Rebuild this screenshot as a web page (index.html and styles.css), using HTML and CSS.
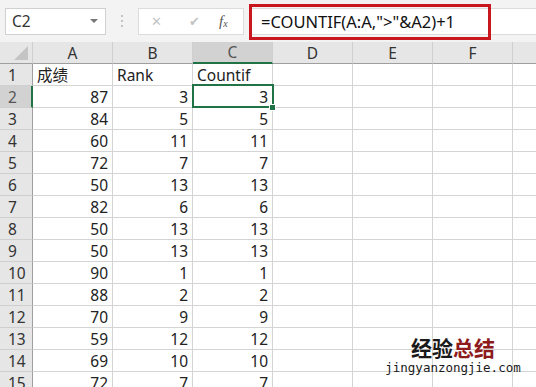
FILE: index.html
```html
<!DOCTYPE html>
<html lang="zh-CN">
<head>
  <meta charset="UTF-8">
  <title>COUNTIF Rank</title>
  <link rel="stylesheet" href="styles.css">
</head>
<body>
  <div class="toolbar">
    <div class="namebox">
      <span>C2</span>
      <span class="arrow"></span>
    </div>
    <div class="dots"><i></i><i></i><i></i></div>
    <div class="buttons">
      <span class="btn cancel">&#x2715;</span>
      <span class="btn ok">&#x2714;</span>
      <span class="btn fx">f<sub>x</sub></span>
    </div>
    <div class="formula">
      <span class="formula-text">=COUNTIF(A:A,"&gt;"&amp;A2)+1</span>
      <div class="mark"></div>
    </div>
  </div>

  <div class="sheet">
    <div class="hd corner"><span class="tri"></span></div>
    <div class="hd col">A</div>
    <div class="hd col">B</div>
    <div class="hd col active-col">C</div>
    <div class="hd col">D</div>
    <div class="hd col">E</div>
    <div class="hd col">F</div>
    <div class="hd col"></div>

    <div class="hd row">1</div>
    <div class="cell">成绩</div>
    <div class="cell">Rank</div>
    <div class="cell">Countif</div>
    <div class="cell"></div><div class="cell"></div><div class="cell"></div><div class="cell"></div>
  </div>

  <div class="watermark">
    <div class="wm-cn"><span>经验</span><span class="red">总结</span></div>
    <div class="wm-en">jingyanzongjie.com</div>
  </div>

  <script>
    const rows = [
      [87, 3, 3], [84, 5, 5], [60, 11, 11], [72, 7, 7], [50, 13, 13],
      [82, 6, 6], [50, 13, 13], [50, 13, 13], [90, 1, 1], [88, 2, 2],
      [70, 9, 9], [59, 12, 12], [69, 10, 10], [72, 7, 7]
    ];
    const sheet = document.querySelector('.sheet');
    rows.forEach((r, i) => {
      const n = i + 2;
      let html = `<div class="hd row${n === 2 ? ' active-row' : ''}">${n}</div>`;
      r.forEach((v, j) => {
        const sel = (n === 2 && j === 2) ? ' selected' : '';
        html += `<div class="cell num${sel}">${v}</div>`;
      });
      html += '<div class="cell"></div><div class="cell"></div><div class="cell"></div><div class="cell"></div>';
      sheet.insertAdjacentHTML('beforeend', html);
    });
  </script>
</body>
</html>
```

FILE: styles.css
```css
body {
  margin: 0;
  width: 536px;
  height: 387px;
  overflow: hidden;
  position: relative;
  background: #fff;
  font-family: "Noto Sans", "Noto Sans CJK SC", sans-serif;
  color: #222;
}

.toolbar {
  height: 42px;
  background: #f3f3f3;
  display: flex;
  align-items: center;
  padding-left: 5px;
  box-sizing: border-box;
}

.namebox {
  width: 101px;
  height: 27px;
  background: #fff;
  border: 1px solid #d0d0d0;
  box-sizing: border-box;
  display: flex;
  align-items: center;
  justify-content: space-between;
  padding: 0 7px 0 6px;
  font-size: 15.5px;
  color: #333;
}
.arrow {
  width: 0;
  height: 0;
  border-left: 4px solid transparent;
  border-right: 4px solid transparent;
  border-top: 4px solid #777;
}

.dots {
  width: 32px;
  display: flex;
  flex-direction: column;
  align-items: center;
  gap: 3px;
}
.dots i {
  width: 2px;
  height: 2px;
  background: #c4c4c4;
}

.buttons {
  width: 106px;
  height: 27px;
  background: #fff;
  border: 1px solid #dcdcdc;
  box-sizing: border-box;
  display: flex;
  align-items: center;
  padding-left: 12px;
}
.btn {
  color: #c4c4c4;
  font-size: 14px;
  font-family: "DejaVu Sans", sans-serif;
}
.cancel { width: 38px; font-size: 13px; }
.ok { width: 30px; font-size: 13px; }
.fx {
  font-family: "Liberation Serif", serif;
  font-style: italic;
  color: #555;
  font-size: 15px;
}
.fx sub { font-size: 10px; vertical-align: -1px; }

.formula {
  flex: 1;
  height: 27px;
  margin-left: 5px;
  background: #fff;
  border-top: 1px solid #dcdcdc;
  border-bottom: 1px solid #dcdcdc;
  box-sizing: border-box;
  display: flex;
  align-items: center;
  padding-left: 12px;
  position: relative;
  font-size: 16.5px;
  color: #111;
}
.mark {
  position: absolute;
  left: 0;
  top: -5px;
  width: 242px;
  height: 36px;
  border: 3px solid #c8171e;
  box-sizing: border-box;
}

.sheet {
  display: grid;
  grid-template-columns: 33px repeat(6, 80px) 40px;
  grid-auto-rows: 22px;
  font-size: 15.5px;
}
.hd {
  background: #e6e6e6;
  color: #333;
  display: flex;
  align-items: center;
  justify-content: center;
  box-sizing: border-box;
}
.col {
  border-right: 1px solid #cfcfcf;
  border-bottom: 1px solid #9f9f9f;
}
.corner {
  border-right: 1px solid #cfcfcf;
  border-bottom: 1px solid #9f9f9f;
  position: relative;
}
.tri {
  position: absolute;
  right: 4px;
  bottom: 3px;
  width: 0;
  height: 0;
  border-left: 14px solid transparent;
  border-bottom: 14px solid #c4c4c4;
}
.row {
  border-right: 1px solid #9f9f9f;
  border-bottom: 1px solid #cfcfcf;
  justify-content: flex-start;
  padding-left: 8px;
}
.active-col {
  background: #d2d2d2;
  border-bottom: 2px solid #217346;
  color: #555;
}
.active-row {
  background: #d2d2d2;
  border-right: 2px solid #217346;
  color: #555;
}

.cell {
  border-right: 1px solid #d4d4d4;
  border-bottom: 1px solid #d4d4d4;
  box-sizing: border-box;
  display: flex;
  align-items: center;
  padding: 0 4px;
  white-space: nowrap;
}
.num {
  justify-content: flex-end;
}
.selected {
  position: relative;
}
.selected::after {
  content: "";
  position: absolute;
  left: -1px;
  top: -2px;
  right: -2px;
  bottom: -1px;
  border: 2px solid #217346;
}
.selected::before {
  content: "";
  position: absolute;
  right: -4px;
  bottom: -4px;
  width: 5px;
  height: 5px;
  background: #217346;
  border: 1px solid #fff;
  z-index: 2;
}

.watermark {
  position: absolute;
  left: 383px;
  top: 334px;
  width: 140px;
  text-align: center;
}
.wm-cn {
  font-family: "Noto Sans CJK SC", sans-serif;
  font-weight: 700;
  font-size: 21px;
  line-height: 26px;
  color: #1a1a1a;
}
.wm-cn .red { color: #8e1b1b; }
.wm-en {
  font-family: "DejaVu Sans Mono", monospace;
  font-size: 12.5px;
  line-height: 16px;
  color: #1a1a1a;
}
```
